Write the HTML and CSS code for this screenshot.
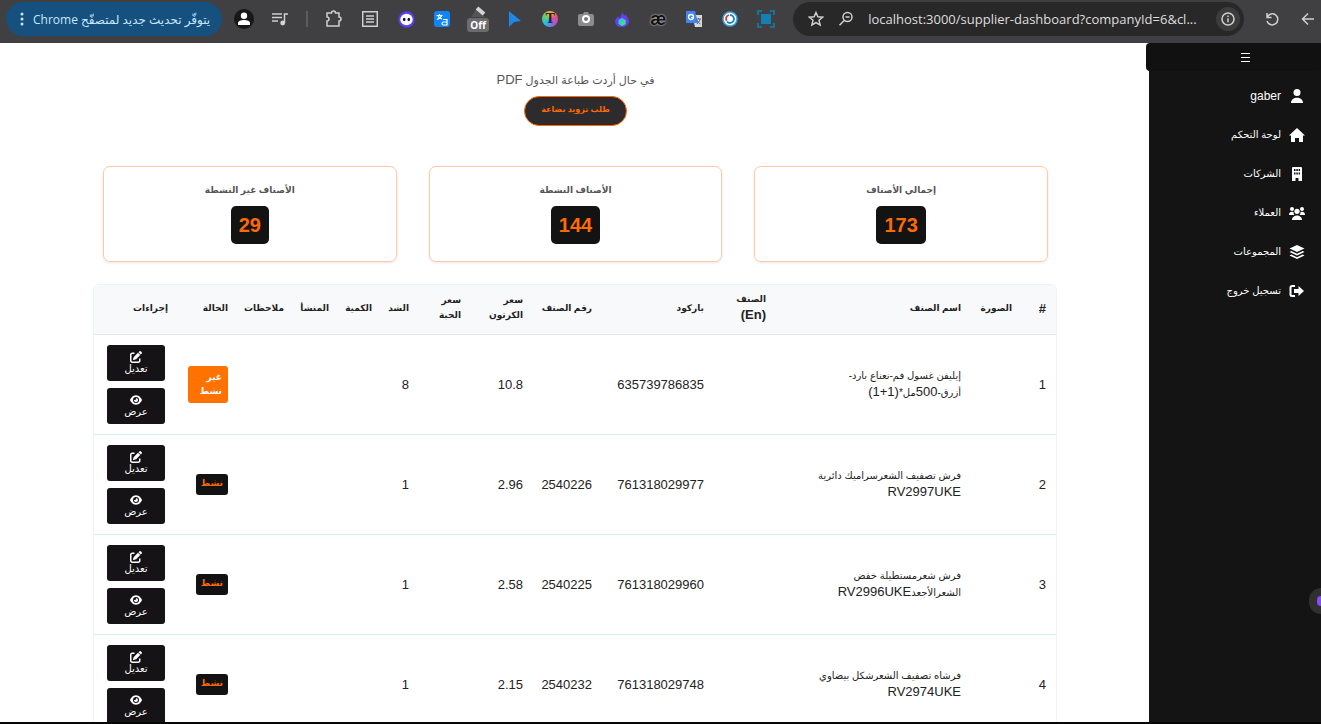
FILE: index.html
```
<!DOCTYPE html>
<html lang="ar" dir="rtl">
<head>
    <meta charset="UTF-8">
    <title>لوحة التحكم</title>
    <link rel="stylesheet" href="styles.css">
</head>
<body>
<svg class="defs" aria-hidden="true">
    <symbol id="i-edit" viewBox="0 0 512 512"><path d="M472 22a56 56 0 0 0-79 0l-30 30 98 98 30-30a56 56 0 0 0 0-79zM172 242c-6 6-11 14-14 22l-29 89c-3 9-1 18 6 25s16 9 25 6l88-30c9-3 16-7 23-13L438 173l-98-98zM96 64c-53 0-96 43-96 96v256c0 53 43 96 96 96h256c53 0 96-43 96-96v-96h-64v96c0 18-14 32-32 32H96c-18 0-32-14-32-32V160c0-18 14-32 32-32h96V64z"/></symbol>
    <symbol id="i-eye" viewBox="0 0 576 512"><path fill-rule="evenodd" d="M288 32C207 32 142 69 95 113 48 156 17 208 3 244c-3 8-3 17 0 25 14 35 45 87 92 131 47 43 112 80 193 80s146-37 193-80c47-44 78-96 92-131 3-8 3-17 0-25-14-36-45-88-92-131-47-44-112-81-193-81zM144 256a144 144 0 1 1 288 0 144 144 0 1 1-288 0zm144-64c0 35-29 64-64 64-7 0-14-1-20-3-6-2-12 1-12 8 0 6 1 13 3 19a96 96 0 1 0 112-117c-6-2-12 4-8 10 2 6 3 12 3 19z"/></symbol>
</svg>

<header class="browser">
    <button class="bar-btn" aria-label="رجوع"><svg width="16" height="16" viewBox="0 0 16 16"><path class="line" d="M14 8H3M8 2.500L2.500 8 8 13.500"/></svg></button>
    <button class="bar-btn reload" aria-label="تحديث"><svg width="16" height="16" viewBox="0 0 16 16"><path class="line" d="M3 2v4.500h4.500M3.200 6.200A5.500 5.500 0 1 1 3 10"/></svg></button>
    <div class="omnibox">
        <button class="info" aria-label="معلومات الموقع"><svg width="14" height="14" viewBox="0 0 14 14"><circle class="line" cx="7" cy="7" r="6"/><path class="line" d="M7 6.300v4M7 3.500v1.400"/></svg></button>
        <input class="url" dir="ltr" type="text" aria-label="العنوان" value="localhost:3000/supplier-dashboard?companyId=6&amp;cl...">
        <button class="bar-btn" aria-label="تصغير"><svg width="16" height="16" viewBox="0 0 16 16"><circle class="line" cx="9.500" cy="6" r="4.500"/><path class="line" d="M6.200 9.500L1.500 14.200M7.500 6h4"/></svg></button>
        <button class="bar-btn" aria-label="إشارة مرجعية"><svg width="16" height="16" viewBox="0 0 16 16"><path class="line" d="M8 1.500l1.900 4.300 4.700.400-3.600 3.100 1.100 4.600L8 11.500l-4.100 2.400L5 9.300 1.400 6.200l4.700-.400z"/></svg></button>
    </div>
    <div class="extensions">
        <button class="ext" aria-label="لقطة"><svg width="18" height="18" viewBox="0 0 18 18"><path fill="#137fb5" d="M4 4h10v10H4z"/><path fill="none" stroke="#137fb5" stroke-width="1.500" d="M1 5V1h4M13 1h4v4M17 13v4h-4M5 17H1v-4"/></svg></button>
        <button class="ext" aria-label="دائرة"><svg width="16" height="16" viewBox="0 0 16 16"><circle cx="8" cy="8" r="7" fill="#fff" stroke="#3da5dc" stroke-width="1.500"/><path fill="none" stroke="#1c87c9" stroke-width="1.800" d="M8 4a4 4 0 1 1-3 6.700"/><path fill="none" stroke="#e0392c" stroke-width="1.800" d="M4.600 10A4 4 0 0 1 7 4"/></svg></button>
        <button class="ext" aria-label="ترجمة Google"><svg width="17" height="17" viewBox="0 0 17 17"><path fill="#d9d9d9" d="M6 4h10v12H9z"/><path fill="#4384f5" d="M0 0h9l3 12H0z"/><circle cx="5" cy="6" r="2.500" fill="none" stroke="#fff" stroke-width="1.300"/><path fill="none" stroke="#fff" d="M5 6.500h3"/><path fill="none" stroke="#5b6b77" d="M10 8h5M12.500 7v1M14 8c0 2-2 4-3 5M11 9c0 1 2 3 3.500 4"/></svg></button>
        <button class="ext ext-ae">æ</button>
        <button class="ext" aria-label="لهب"><svg width="14" height="16" viewBox="0 0 14 16"><path fill="#6b3df0" d="M7 0c0 2 2 3 2.500 5L11 3c0 3 3 4 3 7.500A6 6 0 0 1 7 16a6 6 0 0 1-7-5c0-3 2-4 3-6l1 2c2-1 3-4 3-7z"/><path fill="#2fd0c0" d="M7 7l3.500 2v4L7 15l-3.500-2V9z"/><path fill="#45e08c" d="M7 11l3.500-2v4L7 15z"/></svg></button>
        <button class="ext" aria-label="كاميرا"><svg width="16" height="14" viewBox="0 0 16 14"><path fill="#8c8c8c" d="M2 2h3l1-2h4l1 2h3a2 2 0 0 1 2 2v8a2 2 0 0 1-2 2H2a2 2 0 0 1-2-2V4a2 2 0 0 1 2-2z"/><circle cx="8" cy="7" r="3" fill="#777" stroke="#fff" stroke-width="2"/></svg></button>
        <button class="ext ext-t">T</button>
        <button class="ext" aria-label="مؤشر"><svg width="13" height="16" viewBox="0 0 13 16"><path fill="#1e88ea" d="M1 0l12 10-7 1-5 5z"/></svg></button>
        <button class="ext ext-off" aria-label="قلم"><svg width="18" height="12" viewBox="0 0 18 12"><path fill="#555" d="M2 11L8 2l8 9z"/><path stroke="#d5d5d5" stroke-width="4" d="M8 2l7 6"/></svg><span class="off">Off</span></button>
        <button class="ext" aria-label="ترجمة"><svg width="16" height="16" viewBox="0 0 16 16"><rect width="16" height="16" rx="3" fill="#0d86f7"/><path fill="none" stroke="#fff" stroke-width="1.200" d="M2.500 4.500h6M5.500 3v1.500M7.500 4.500c-.5 2-2 3-4.500 4M4 5c.5 1.500 2 2.500 4 3M9 8.500h4V14H9.500c-2 0-2-3 0-3H13"/></svg></button>
        <button class="ext" aria-label="مساعد"><svg width="17" height="17" viewBox="0 0 17 17"><circle cx="8.500" cy="8.500" r="8.200" fill="#5b3ff0"/><ellipse cx="8.500" cy="8.500" rx="6.200" ry="5.700" fill="#fff"/><ellipse cx="6.200" cy="8.500" rx="1.300" ry="1.800" fill="#17112e"/><ellipse cx="10.800" cy="8.500" rx="1.300" ry="1.800" fill="#17112e"/></svg></button>
        <button class="ext" aria-label="قائمة القراءة"><svg width="16" height="16" viewBox="0 0 16 16"><path class="line" d="M.7.700h14.600v14.600H.7zM4 5h8M4 8h8M4 11h8"/></svg></button>
        <button class="ext" aria-label="الإضافات"><svg width="18" height="18" viewBox="0 0 18 18"><path class="line" d="M2 3h4.500a2 2 0 0 1 4 0H14v4a2 2 0 0 1 0 4v5H2v-5a2 2 0 0 0 0-4z"/></svg></button>
    </div>
    <span class="divider"></span>
    <button class="bar-btn" aria-label="وسائط"><svg width="16" height="14" viewBox="0 0 16 14"><path class="line" d="M0 2h10M0 5.500h10M0 9h6M12.500 11V2H16"/><circle cx="10.700" cy="11" r="2.400" fill="#d5d5d5"/></svg></button>
    <button class="profile" aria-label="الملف الشخصي"><svg width="14" height="14" viewBox="0 0 14 14"><circle cx="7" cy="3.800" r="3.200" fill="#fff"/><path fill="#fff" d="M1 13v-2c0-4 12-4 12 0v2z"/></svg></button>
    <button class="update"><span>يتوفّر تحديث جديد لمتصفّح Chrome</span><svg width="4" height="14" viewBox="0 0 4 14"><circle cx="2" cy="2" r="1.500"/><circle cx="2" cy="7" r="1.500"/><circle cx="2" cy="12" r="1.500"/></svg></button>
</header>

<div class="layout">
    <aside class="sidebar">
        <button class="toggle" aria-label="القائمة"><svg width="9" height="9" viewBox="0 0 9 9"><path stroke="#fff" d="M0 .5h9M0 4.500h9M0 8.500h9"/></svg></button>
        <nav>
            <a href="#" class="user"><svg viewBox="0 0 16 16"><circle cx="8" cy="4.500" r="3.500"/><path d="M2 15c0-7 12-7 12 0z"/></svg>gaber</a>
            <a href="#"><svg viewBox="0 0 16 16"><path d="M8 1l8 7.500h-2V15h-4v-4H6v4H2V8.500H0z"/></svg>لوحة التحكم</a>
            <a href="#"><svg viewBox="0 0 16 16"><path fill-rule="evenodd" d="M4 1h8a1 1 0 0 1 1 1v13H9.500v-3h-3v3H3V2a1 1 0 0 1 1-1zm1 2v2h1.500V3zm2.300 0v2h1.500V3zm2.300 0v2H11V3zM5 6.500v2h1.500v-2zm2.300 0v2h1.500v-2zm2.300 0v2H11v-2z"/></svg>الشركات</a>
            <a href="#"><svg viewBox="0 0 16 16"><circle cx="3" cy="4" r="2"/><circle cx="13" cy="4" r="2"/><circle cx="8" cy="6.300" r="2.600"/><path d="M0 10c0-3 2-3.500 4.500-3 0 1.500.5 2.500 1 3zM16 10c0-3-2-3.500-4.500-3 0 1.500-.5 2.500-1 3zM3 15c0-6 10-6 10 0z"/></svg>العملاء</a>
            <a href="#"><svg viewBox="0 0 16 16"><path d="M8 1l7.500 3.500L8 8 .5 4.500zM2.300 7L8 9.700 13.700 7l1.800 1L8 11.500.5 8zM2.300 10.500L8 13.200l5.700-2.700 1.800 1L8 15 .5 11.500z"/></svg>المجموعات</a>
            <a href="#"><svg viewBox="0 0 16 16"><path fill="none" stroke="#fff" stroke-width="2" d="M6 3H3a1.500 1.500 0 0 0-1.500 1.500v7A1.500 1.500 0 0 0 3 13h3"/><path d="M9.500 3L15 8l-5.500 5v-3H5V6h4.500z"/></svg>تسجيل خروج</a>
        </nav>
    </aside>

    <main class="content">
        <div class="print">
            <p>في حال أردت طباعة الجدول <span class="lat">PDF</span></p>
            <button class="btn-request">طلب تزويد بضاعة</button>
        </div>

        <div class="stats">
            <div class="stat"><h3>إجمالي الأصناف</h3><span class="num">173</span></div>
            <div class="stat"><h3>الأصناف النشطة</h3><span class="num">144</span></div>
            <div class="stat"><h3>الأصناف غير النشطة</h3><span class="num">29</span></div>
        </div>

        <table class="items">
            <colgroup>
                <col class="c-id"><col class="c-img"><col class="c-name"><col class="c-en"><col class="c-barcode"><col class="c-no"><col class="c-carton"><col class="c-piece"><col class="c-pack"><col class="c-qty"><col class="c-origin"><col class="c-notes"><col class="c-status"><col class="c-actions">
            </colgroup>
            <thead>
                <tr>
                    <th class="lat">#</th>
                    <th>الصورة</th>
                    <th>اسم الصنف</th>
                    <th>الصنف <span class="lat">(En)</span></th>
                    <th>باركود</th>
                    <th>رقم الصنف</th>
                    <th>سعر<br>الكرتون</th>
                    <th>سعر<br>الحبة</th>
                    <th>الشد</th>
                    <th>الكمية</th>
                    <th>المنشأ</th>
                    <th>ملاحظات</th>
                    <th>الحالة</th>
                    <th>إجراءات</th>
                </tr>
            </thead>
            <tbody>
                <tr>
                    <td>1</td>
                    <td></td>
                    <td class="name">إيليفن غسول فم-نعناع بارد-<br>أزرق-<span class="lat">500</span>مل*<span class="lat">(1+1)</span></td>
                    <td></td>
                    <td>635739786835</td>
                    <td></td>
                    <td>10.8</td>
                    <td></td>
                    <td>8</td>
                    <td></td>
                    <td></td>
                    <td></td>
                    <td><span class="badge off-badge">غير<br>نشط</span></td>
                    <td><div class="actions"><button><svg><use href="#i-edit"/></svg>تعديل</button><button><svg><use href="#i-eye"/></svg>عرض</button></div></td>
                </tr>
                <tr>
                    <td>2</td>
                    <td></td>
                    <td class="name">فرش تصفيف الشعرسراميك دائرية<br><span class="lat">RV2997UKE</span></td>
                    <td></td>
                    <td>761318029977</td>
                    <td>2540226</td>
                    <td>2.96</td>
                    <td></td>
                    <td>1</td>
                    <td></td>
                    <td></td>
                    <td></td>
                    <td><span class="badge">نشط</span></td>
                    <td><div class="actions"><button><svg><use href="#i-edit"/></svg>تعديل</button><button><svg><use href="#i-eye"/></svg>عرض</button></div></td>
                </tr>
                <tr>
                    <td>3</td>
                    <td></td>
                    <td class="name">فرش شعرمستطيلة خفض<br>الشعرالأجعد<span class="lat">RV2996UKE</span></td>
                    <td></td>
                    <td>761318029960</td>
                    <td>2540225</td>
                    <td>2.58</td>
                    <td></td>
                    <td>1</td>
                    <td></td>
                    <td></td>
                    <td></td>
                    <td><span class="badge">نشط</span></td>
                    <td><div class="actions"><button><svg><use href="#i-edit"/></svg>تعديل</button><button><svg><use href="#i-eye"/></svg>عرض</button></div></td>
                </tr>
                <tr>
                    <td>4</td>
                    <td></td>
                    <td class="name">فرشاه تصفيف الشعرشكل بيضاوي<br><span class="lat">RV2974UKE</span></td>
                    <td></td>
                    <td>761318029748</td>
                    <td>2540232</td>
                    <td>2.15</td>
                    <td></td>
                    <td>1</td>
                    <td></td>
                    <td></td>
                    <td></td>
                    <td><span class="badge">نشط</span></td>
                    <td><div class="actions"><button><svg><use href="#i-edit"/></svg>تعديل</button><button><svg><use href="#i-eye"/></svg>عرض</button></div></td>
                </tr>
            </tbody>
        </table>
    </main>
    <span class="bubble"></span>
</div>
<div class="window-edge"></div>
</body>
</html>
```
FILE: styles.css
```
*{box-sizing:border-box;}
body{margin:0;height:100vh;display:flex;flex-direction:column;overflow:hidden;background:#fff;color:#222;font-family:"Liberation Sans","DejaVu Sans",sans-serif;font-size:13px;}
button{font-family:inherit;border:0;padding:0;background:none;cursor:pointer;}
svg{display:block;flex:none;}
.defs{position:absolute;width:0;height:0;}
.lat{font-size:13px;}

/* browser bar */
.browser{flex:none;display:flex;align-items:center;height:43px;padding:0 5px 5px 6px;background:#403f41;font-family:"Open Sans","DejaVu Sans",sans-serif;}
.line{fill:none;stroke:#d0d0d0;stroke-width:1.5;}
.bar-btn{width:16px;height:24px;display:flex;align-items:center;justify-content:center;flex:none;}
.reload{margin:0 20px;}
.omnibox{flex:1;display:flex;align-items:center;gap:14px;height:34px;padding:0 4px 0 15px;border-radius:17px;background:#292829;}
.info{width:24px;height:24px;border-radius:12px;background:#3d3c3d;display:flex;align-items:center;justify-content:center;flex:none;}
.url{flex:1;min-width:0;border:0;padding:0;outline:0;background:none;color:#dedede;font-family:inherit;font-size:13px;}
.extensions{display:flex;gap:12px;margin-right:15px;}
.ext{width:24px;height:30px;display:flex;align-items:center;justify-content:center;flex:none;}
.ext-ae{font:bold 18px "Liberation Sans",sans-serif;color:#111;text-shadow:0 0 2px #fff;}
.ext-t{width:16px;height:16px;margin:7px 4px;border-radius:8px;background:conic-gradient(#f0b52d,#e84c8a,#9b5be0,#25b8e8,#59cf7b,#f0b52d);font:bold 14px "Liberation Serif",serif;color:#223;}
.ext-off{flex-direction:column;}
.off{padding:0 3px;border-radius:3px;background:#6c6c6c;color:#fff;font-size:10px;line-height:14px;font-weight:bold;}
.divider{width:2px;height:16px;margin:0 14px 0 18px;background:#5f5c60;}
.profile{width:20px;height:20px;margin:0 18px 0 12px;border-radius:10px;background:#171717;display:flex;align-items:center;justify-content:center;}
.update{height:34px;padding:0 12px 0 14px;border-radius:17px;background:#15507f;color:#c9e7fb;font-size:12px;display:flex;align-items:center;gap:9px;white-space:nowrap;}
.update svg{fill:#c9e7fb;}

.layout{flex:1;min-height:0;display:flex;position:relative;}

/* sidebar */
.sidebar{flex:none;width:172px;background:#141414;}
.toggle{display:flex;align-items:center;justify-content:center;width:175px;height:28px;padding-left:24px;border-radius:4px;background:#111;}
.sidebar nav{padding-top:5px;}
.sidebar a{display:flex;align-items:center;gap:8px;height:39px;padding-right:16px;color:#fff;font-size:10px;text-decoration:none;}
.sidebar a.user{font-size:12px;}
.sidebar a svg{width:16px;height:16px;fill:#fff;}

/* content */
.content{flex:1;min-width:0;padding:27px 92px 0 94px;overflow:hidden;}
.print{display:flex;flex-direction:column;align-items:center;}
.print p{margin:0 0 6px;font-size:11px;line-height:19px;color:#555;}
.btn-request{height:30px;padding:0 16px 4px;border:1px solid #ff6a00;border-radius:15px;background:#2d2b2d;color:#ff6a00;font-size:8px;font-weight:bold;}
.stats{display:flex;gap:32px;margin-top:40px;padding:0 9px;}
.stat{flex:1;height:96px;padding-top:13px;border:1px solid #ffc9a5;border-radius:7px;box-shadow:0 1px 3px #e8e8ee;text-align:center;}
.stat h3{margin:0 0 6px;font-size:9px;line-height:20px;color:#555;}
.num{display:inline-block;padding:0 8px;border-radius:5px;background:#121312;color:#ff6a00;font-size:20px;line-height:38px;font-weight:bold;}

.items{width:100%;margin-top:22px;table-layout:fixed;border-collapse:separate;border-spacing:0;border:1px solid #eef3f8;border-radius:6px 6px 0 0;}
.items th{height:50px;padding:0 10px 3px;background:#f8f9fa;font-size:9px;line-height:15px;text-align:right;white-space:nowrap;border-bottom:1px solid #e3ebe6;}
.items th:nth-child(4){white-space:normal;}
.items th.lat{font-size:13px;}
.items td{height:100px;padding:9px 10px 10px;text-align:right;white-space:nowrap;border-bottom:1px solid #d3f2e4;}
.items td.name{font-size:10px;line-height:16px;}
.c-id{width:34px;}
.c-img{width:51px;}
.c-name{width:195px;}
.c-en{width:62px;}
.c-barcode{width:112px;}
.c-no{width:69px;}
.c-carton{width:62px;}
.c-piece{width:52px;}
.c-pack{width:37px;}
.c-qty{width:43px;}
.c-origin{width:45px;}
.c-notes{width:56px;}
.c-status{width:60px;}
.c-actions{width:84px;}
.badge{display:inline-block;padding:2px 5px 5px;border-radius:3px;background:#121212;color:#ff6a00;font-size:9px;line-height:14px;font-weight:bold;}
.badge.off-badge{padding:4px 6px 5px 12px;background:#ff7200;color:#fff;}
.actions{display:flex;flex-direction:column;gap:7px;margin:0 3px;}
.actions button{display:flex;flex-direction:column;align-items:center;justify-content:center;height:36px;border-radius:3px;background:#151315;color:#fff;font-size:10px;line-height:12px;}
.actions svg{width:12px;height:12px;fill:#fff;}

/* floating helper on the window edge */
.bubble{position:absolute;right:-12px;bottom:108px;width:24px;height:26px;border:8px solid #303030;border-radius:13px;background:#8a4df5;}
.window-edge{flex:none;height:2px;background:#060606;}
```
